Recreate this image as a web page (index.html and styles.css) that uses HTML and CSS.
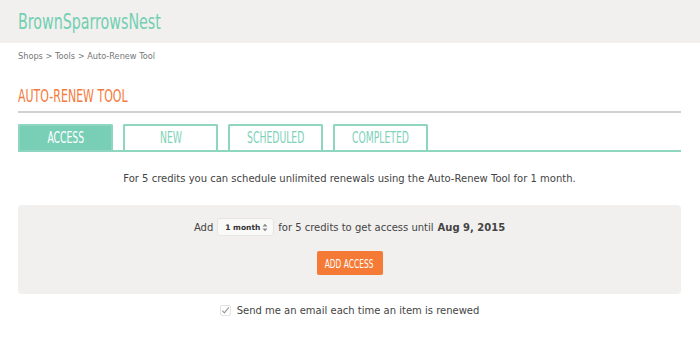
FILE: index.html
```html
<!DOCTYPE html>
<html lang="en">
<head>
    <meta charset="UTF-8">
    <title>Auto-Renew Tool</title>
    <link rel="stylesheet" href="styles.css">
</head>
<body>
    <header class="topbar">
        <div class="brand"><span class="narrow">BrownSparrowsNest</span></div>
    </header>
    <main class="page">
        <nav class="crumbs">Shops &gt; Tools &gt; Auto-Renew Tool</nav>
        <h1 class="title"><span class="narrow">AUTO-RENEW TOOL</span></h1>
        <ul class="tabs">
            <li class="tab active"><span class="narrow">ACCESS</span></li>
            <li class="tab"><span class="narrow">NEW</span></li>
            <li class="tab"><span class="narrow">SCHEDULED</span></li>
            <li class="tab"><span class="narrow">COMPLETED</span></li>
        </ul>
        <p class="intro">For 5 credits you can schedule unlimited renewals using the Auto-Renew Tool for 1 month.</p>
        <div class="panel">
            <p class="offer">Add
                <span class="picker">
                    <select>
                        <option>1 month</option>
                        <option>3 months</option>
                    </select>
                    <svg class="picker-arrows" width="6" height="9" viewBox="0 0 6 9"><path d="M0.5 3.5 L3 0.8 L5.5 3.5 Z M0.5 5.5 L3 8.2 L5.5 5.5 Z" fill="#888"/></svg>
                </span>
                for 5 credits to get access until <b>Aug 9, 2015</b></p>
            <button class="add-btn"><span class="narrow">ADD ACCESS</span></button>
        </div>
        <label class="notify">
            <span class="check"><svg width="11" height="11" viewBox="0 0 11 11"><rect x="0.5" y="0.5" width="10" height="10" rx="1.5" fill="#fff" stroke="#e2e2e2"/><path d="M2.3 5.6 L4.4 7.8 L8.8 2.4" fill="none" stroke="#9a9a9a" stroke-width="1.2"/></svg></span>
            Send me an email each time an item is renewed
        </label>
    </main>
</body>
</html>
```

FILE: styles.css
```css
body {
    margin: 0;
    font-family: "DejaVu Sans", Verdana, sans-serif;
    font-size: 10px;
    color: #444;
    background: #fff;
}
.narrow {
    display: inline-block;
    white-space: nowrap;
    font-stretch: condensed;
    transform-origin: center;
}
.topbar {
    background: #f1f0ee;
    height: 43px;
    padding: 0 18px;
    display: flex;
    align-items: center;
}
.brand {
    font-size: 22px;
    color: #72cfb2;
}
.brand .narrow {
    transform: scaleX(0.72);
    transform-origin: left;
}
.page {
    padding: 0 19px 0 18px;
}
.crumbs {
    font-size: 8.2px;
    color: #777;
    margin-top: 8px;
}
.title {
    font-weight: normal;
    font-size: 18px;
    color: #f47a3a;
    margin: 24px 0 0;
    padding-bottom: 5px;
    border-bottom: 2px solid #d2d2d2;
}
.title .narrow {
    transform: scaleX(0.68);
    transform-origin: left;
}
.tabs {
    list-style: none;
    margin: 11px 0 0;
    padding: 0;
    display: flex;
    gap: 10px;
    border-bottom: 2px solid #8ed6c0;
}
.tab {
    width: 91px;
    height: 24px;
    border: 2px solid #8ed6c0;
    border-bottom: none;
    border-radius: 2px 2px 0 0;
    display: flex;
    align-items: center;
    justify-content: center;
    font-size: 15px;
    color: #7dd2b9;
}
.tab .narrow {
    transform: scaleX(0.686);
}
.tab.active {
    background: #78cfb6;
    color: #fff;
}
.intro {
    text-align: center;
    margin: 21px 0 0;
}
.panel {
    background: #f1f0ee;
    border-radius: 4px;
    margin-top: 21px;
    height: 89px;
    display: flex;
    flex-direction: column;
    align-items: center;
}
.offer {
    margin: 13px 0 0;
    display: flex;
    align-items: center;
    gap: 4px;
}
.picker {
    position: relative;
    display: inline-block;
}
.picker select {
    appearance: none;
    -webkit-appearance: none;
    width: 57px;
    height: 18px;
    border: 1px solid #e6e5e2;
    border-radius: 3px;
    background: #f9f9f8;
    font-family: "DejaVu Sans", sans-serif;
    font-size: 7.5px;
    font-weight: bold;
    color: #333;
    padding: 0 0 0 7px;
}
.picker-arrows {
    position: absolute;
    right: 6px;
    top: 5px;
}
.add-btn {
    margin-top: 15px;
    width: 66px;
    height: 24px;
    border: none;
    border-radius: 2px;
    background: #f47a35;
    color: #fff;
    font-family: "DejaVu Sans", sans-serif;
    font-size: 13px;
    padding: 0;
    display: flex;
    align-items: center;
    justify-content: center;
}
.add-btn .narrow {
    transform: scaleX(0.64);
}
.notify {
    display: flex;
    justify-content: center;
    align-items: center;
    gap: 6px;
    margin-top: 11px;
    color: #444;
}
.check {
    display: flex;
}
```
